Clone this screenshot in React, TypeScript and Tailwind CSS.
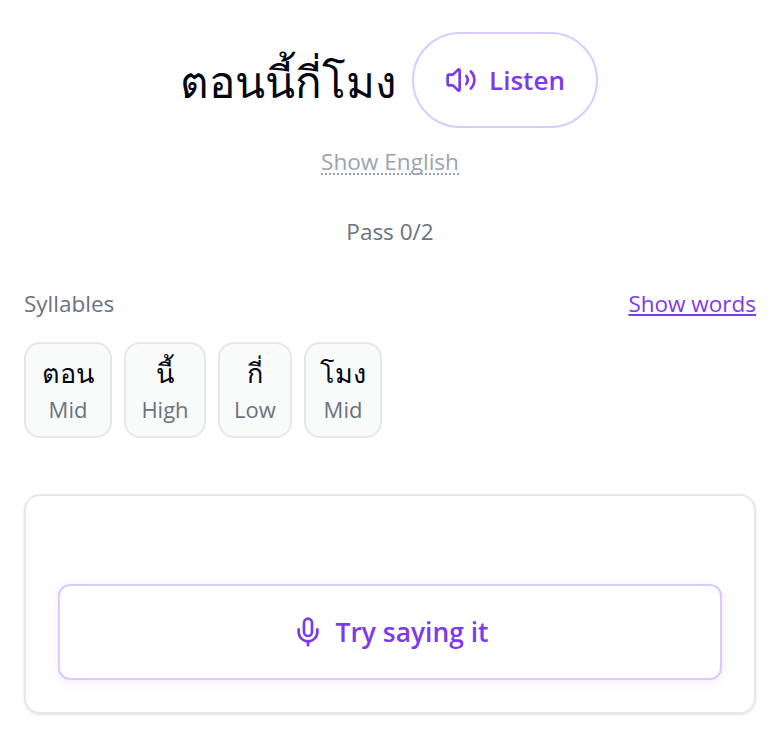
import { Mic, Volume2 } from "lucide-react";

const syllables = [
  { t: "ตอน", tone: "Mid", w: "w-[88px]" },
  { t: "นี้", tone: "High", w: "w-[82px]" },
  { t: "กี่", tone: "Low", w: "w-[74px]" },
  { t: "โมง", tone: "Mid", w: "w-[78px]" },
];

export default function App() {
  return (
    <div className="w-[780px] h-[730px] bg-white px-6 pt-8 overflow-hidden font-['Open_Sans','Noto_Sans',sans-serif]">
      <div className="flex items-center justify-center gap-4 h-24 pr-[2px]">
        <h1 className="text-[44px] leading-[60px] pt-[2px] text-[#030712] font-normal">ตอนนี้กี่โมง</h1>
        <button className="flex items-center justify-center gap-3 w-[186px] h-24 rounded-full border-2 border-[#dcc9fd] text-[#7c3aed] text-[26px] font-semibold">
          <Volume2 size={32} strokeWidth={2} />
          <span>Listen</span>
        </button>
      </div>
      <div className="flex justify-center mt-5">
        <span className="text-[22.6px] leading-7 text-[#9ca3af] border-b-2 border-dotted border-[#9ca3af] h-[27px]">Show English</span>
      </div>
      <p className="text-center text-[22.5px] leading-7 text-[#6b7280] mt-[43px]">Pass 0/2</p>
      <div className="flex items-center justify-between mt-[44px]">
        <span className="text-[22.5px] leading-7 text-[#6b7280]">Syllables</span>
        <span className="text-[22.5px] leading-7 text-[#7c3aed] underline">Show words</span>
      </div>
      <div className="flex gap-3 mt-6">
        {syllables.map((s) => (
          <div key={s.t + s.tone} className={`${s.w} h-24 rounded-2xl border-2 border-[#e5e7eb] bg-[#f9fafa] flex flex-col items-center justify-center gap-1 pb-[3px]`}>
            <span className="text-[27px] leading-9 text-[#030712]">{s.t}</span>
            <span className="text-[22px] leading-7 text-[#6b7280]">{s.tone}</span>
          </div>
        ))}
      </div>
      <div className="mt-14 h-[220px] rounded-2xl border-2 border-[#e5e7eb] px-8 pt-[88px] shadow-sm">
        <button className="w-full h-24 rounded-xl border-2 border-[#dcc9fd] bg-white flex items-center justify-center gap-3 text-[#7c3aed] text-[26.4px] font-semibold shadow-[0_2px_12px_rgba(124,58,237,0.1)]">
          <Mic size={32} strokeWidth={2} />
          <span className="pt-[2px]">Try saying it</span>
        </button>
      </div>
    </div>
  );
}
